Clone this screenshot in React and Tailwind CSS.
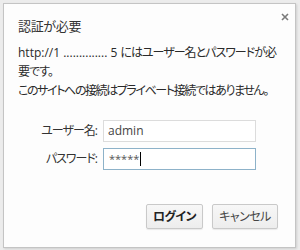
export default function App() {
  const font = "font-['Open_Sans','Noto_Sans_CJK_JP',sans-serif] [font-feature-settings:'palt']";
  return (
    <div className={`w-[300px] h-[250px] bg-[#ececec] pl-[3px] pt-[3px] ${font}`}>
      <div className="w-[293px] h-[245px] border border-[#c4c4c4] bg-[#fdfdfd] shadow-[1px_1px_2px_rgba(0,0,0,0.12)] flex flex-col pl-[14px] pr-[17px]">
        <div className="flex justify-between items-start pt-[13px]">
          <div className="h-[18px] text-[13px] leading-[18px] text-[#333] tracking-[-0.3px]">認証が必要</div>
          <svg width="8" height="8" viewBox="0 0 8 8" className="mt-[-4px] mr-[-11px]">
            <path d="M1 1 L7 7 M7 1 L1 7" stroke="#7a7a7a" strokeWidth="1.6" />
          </svg>
        </div>
        <div className="mt-[8px] flex flex-col text-[12px] leading-[19px] text-[#2a2a2a] whitespace-nowrap">
          <div className="h-[19px]">
            http://1 .............. 5 <span className="tracking-[-1px]">にはユーザー名とパスワードが必</span>
          </div>
          <div className="h-[19px] tracking-[-1px]">要です。</div>
          <div className="h-[19px] tracking-[-1.4px]">このサイトへの接続はプライベート接続ではありません。</div>
        </div>
        <div className="mt-[20px] flex flex-col gap-[6px] text-[12px] text-[#333]">
          <div className="flex items-center">
            <span className="w-[85px] text-right pr-[6px] tracking-[-1px]">ユーザー名:</span>
            <div className="w-[153px] h-[22px] border border-[#dcdcdc] bg-white flex items-center pl-[4px] text-[#444]">admin</div>
          </div>
          <div className="flex items-center">
            <span className="w-[85px] text-right pr-[6px] tracking-[-1px]">パスワード:</span>
            <div className="w-[153px] h-[22px] border border-[#8db2c9] bg-white flex items-center pl-[5px] text-[#555]">
              <span className="text-[11px]">*****</span>
              <span className="w-px h-[14px] bg-black ml-[1px]"></span>
            </div>
          </div>
        </div>
        <div className="mt-auto mb-[18px] flex justify-end gap-[9px] text-[12px]">
          <button className="w-[57px] h-[25px] border border-[#c9c9c9] rounded-[2px] bg-gradient-to-b from-[#f7f7f7] to-[#ededed] font-bold text-[#222] tracking-[-0.5px] shadow-[0_1px_1px_rgba(0,0,0,0.08)]">ログイン</button>
          <button className="w-[66px] h-[25px] border border-[#c9c9c9] rounded-[2px] bg-gradient-to-b from-[#f7f7f7] to-[#ededed] text-[#444] tracking-[-0.5px] shadow-[0_1px_1px_rgba(0,0,0,0.08)]">キャンセル</button>
        </div>
      </div>
    </div>
  );
}
